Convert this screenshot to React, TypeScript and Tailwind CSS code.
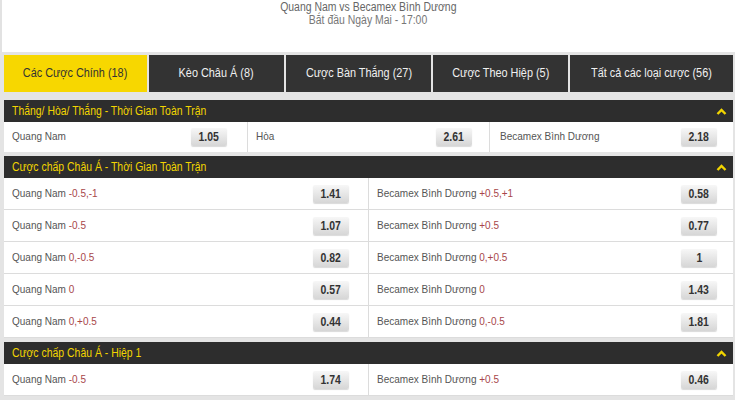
import React from "react";

const TABS = [
  { label: "Các Cược Chính (18)", w: "w-[143px]", active: true },
  { label: "Kèo Châu Á (8)", w: "w-[135px]", active: false },
  { label: "Cược Bàn Thắng (27)", w: "w-[145px]", active: false },
  { label: "Cược Theo Hiệp (5)", w: "w-[135px]", active: false },
  { label: "Tất cả các loại cược (56)", w: "flex-1", active: false },
];

const FULL_HANDICAP = [
  { home: "-0.5,-1", homeOdd: "1.41", away: "+0.5,+1", awayOdd: "0.58" },
  { home: "-0.5", homeOdd: "1.07", away: "+0.5", awayOdd: "0.77" },
  { home: "0,-0.5", homeOdd: "0.82", away: "0,+0.5", awayOdd: "1" },
  { home: "0", homeOdd: "0.57", away: "0", awayOdd: "1.43" },
  { home: "0,+0.5", homeOdd: "0.44", away: "0,-0.5", awayOdd: "1.81" },
];

const HALF_HANDICAP = [{ home: "-0.5", homeOdd: "1.74", away: "+0.5", awayOdd: "0.46" }];

// the site's text is set in a narrow face; squeeze Liberation Sans to match
const Narrow = ({ children, center }: { children: React.ReactNode; center?: boolean }) => (
  <span className={`inline-block whitespace-nowrap scale-x-[0.87] ${center ? "origin-center" : "origin-left"}`}>
    {children}
  </span>
);

const Odd = ({ value }: { value: string }) => (
  <span className="flex h-[18px] w-[36px] items-center justify-center rounded-[2px] bg-gradient-to-b from-[#f7f7f7] to-[#d6d6d6] text-[12px] font-bold text-[#333] shadow-[0_1px_1px_rgba(0,0,0,0.15)]">
    <Narrow center>{value}</Narrow>
  </span>
);

const Chevron = () => (
  <svg width="11" height="7" viewBox="0 0 11 7">
    <polyline points="1.5,6 5.5,2 9.5,6" fill="none" stroke="#f2d500" strokeWidth="2.4" />
  </svg>
);

const SectionHeader = ({ title }: { title: string }) => (
  <div className="flex h-[22px] items-center justify-between bg-[#2d2d2d] pl-[8px] pr-[6px] text-[12px] text-[#f2d500]">
    <Narrow>{title}</Narrow>
    <Chevron />
  </div>
);

const HandicapRow = ({ row }: { row: (typeof FULL_HANDICAP)[number] }) => (
  <div className="flex h-[32px] border-b border-[#dcdcdc] bg-white text-[11.5px] text-[#555]">
    <div className="flex w-[365px] items-center justify-between border-r border-[#dcdcdc] pl-[8px] pr-[19px]">
      <Narrow>
        Quang Nam <span className="text-[#a8474a]">{row.home}</span>
      </Narrow>
      <Odd value={row.homeOdd} />
    </div>
    <div className="flex flex-1 items-center justify-between pl-[8px] pr-[16px]">
      <Narrow>
        Becamex Bình Dương <span className="text-[#a8474a]">{row.away}</span>
      </Narrow>
      <Odd value={row.awayOdd} />
    </div>
  </div>
);

export default function App() {
  return (
    <div className="h-[400px] w-[735px] overflow-hidden bg-white font-['Liberation_Sans',Arial,sans-serif]">
      <div className="h-[52px] border-l-2 border-[#e2e2e2] pt-[1px] text-center text-[12px] leading-[13px] text-[#666]">
        <div>
          <Narrow center>Quang Nam vs Becamex Bình Dương</Narrow>
        </div>
        <div className="text-[#777]">
          <Narrow center>Bắt đầu Ngày Mai - 17:00</Narrow>
        </div>
      </div>

      <div className="h-[348px] bg-[#e4e4e4] pl-[4px] pr-[2px] pt-[3px]">
        <div className="flex h-[37px] gap-[2px]">
          {TABS.map((t) => (
            <div
              key={t.label}
              className={`${t.w} flex items-center justify-center text-[12.5px] ${
                t.active ? "bg-[#f7d700] text-[#333]" : "bg-[#333333] text-[#f0f0f0]"
              }`}
            >
              <Narrow center>{t.label}</Narrow>
            </div>
          ))}
        </div>

        <div className="mt-[8px]">
          <SectionHeader title="Thắng/ Hòa/ Thắng - Thời Gian Toàn Trận" />
          <div className="flex h-[30px] bg-white text-[11.5px] text-[#555]">
            <div className="flex w-[244px] items-center justify-between border-r border-[#dcdcdc] pl-[8px] pr-[20px]">
              <Narrow>Quang Nam</Narrow>
              <Odd value="1.05" />
            </div>
            <div className="flex w-[242px] items-center justify-between border-r border-[#dcdcdc] pl-[8px] pr-[17px]">
              <Narrow>Hòa</Narrow>
              <Odd value="2.61" />
            </div>
            <div className="flex flex-1 items-center justify-between pl-[10px] pr-[16px]">
              <Narrow>Becamex Bình Dương</Narrow>
              <Odd value="2.18" />
            </div>
          </div>
        </div>

        <div className="mt-[4px]">
          <SectionHeader title="Cược chấp Châu Á - Thời Gian Toàn Trận" />
          {FULL_HANDICAP.map((r) => (
            <HandicapRow key={r.homeOdd} row={r} />
          ))}
        </div>

        <div className="mt-[4px]">
          <SectionHeader title="Cược chấp Châu Á - Hiệp 1" />
          {HALF_HANDICAP.map((r) => (
            <HandicapRow key={r.homeOdd} row={r} />
          ))}
        </div>
      </div>
    </div>
  );
}
